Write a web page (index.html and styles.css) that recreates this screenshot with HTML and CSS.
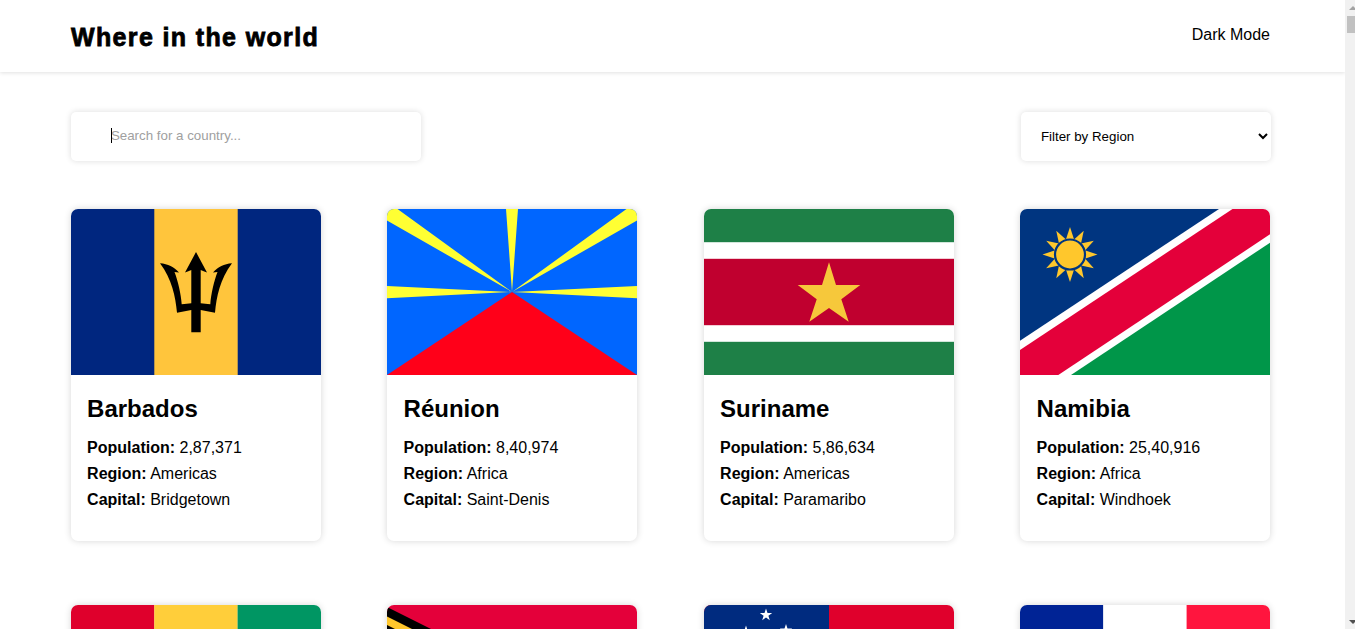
FILE: index.html
```html
<!DOCTYPE html>
<html lang="en">
<head>
<meta charset="utf-8">
<title>Where in the world</title>
<link rel="stylesheet" href="styles.css">
</head>
<body>
<div class="page">
  <header class="topbar">
    <h1 class="brand">Where in the world</h1>
    <button class="mode" type="button">Dark Mode</button>
  </header>
  <main class="content">
    <div class="toolbar">
      <div class="search">
        <input class="search-input" type="text" placeholder="Search for a country...">
      </div>
      <select class="region">
        <option>Filter by Region</option>
        <option>Africa</option>
        <option>Americas</option>
        <option>Asia</option>
        <option>Europe</option>
        <option>Oceania</option>
      </select>
    </div>
    <div class="grid">
      <article class="card">
        <svg class="flag" viewBox="0 0 250 166" preserveAspectRatio="none" aria-label="Flag of Barbados">
          <rect width="250" height="166" fill="#00267f"/>
          <rect x="83.3" width="83.4" height="166" fill="#ffc53c"/>
          <path d="M125 43 L136 63.5 Q132.5 62 129.7 61 L129.7 94.3 Q134 95 139.3 95.3 C140 85 143 72 146.5 63 L142 63.5 C147 58 153 55 161 54.3 C149 70 145.5 88 144 103.7 L129.7 101 L129.7 123.3 L120.3 123.3 L120.3 101 L106 103.7 C104.5 88 101 70 89 54.3 C97 55 103 58 108 63.5 L103.5 63 C107 72 110 85 110.7 95.3 Q116 95 120.3 94.3 L120.3 61 Q117.5 62 114 63.5 Z" fill="#000"/>
        </svg>
        <div class="info">
          <h2 class="name">Barbados</h2>
          <p class="fact"><b>Population:</b> 2,87,371</p>
          <p class="fact"><b>Region:</b> Americas</p>
          <p class="fact"><b>Capital:</b> Bridgetown</p>
        </div>
      </article>
      <article class="card">
        <svg class="flag" viewBox="0 0 250 166" preserveAspectRatio="none" aria-label="Flag of Réunion">
          <rect width="250" height="166" fill="#0066ff"/>
          <path d="M125 83 L0 166 L250 166 Z" fill="#ff0019"/>
          <path d="M125 83 L119 0 L131 0 Z M125 83 L10.5 0 L0 0 L0 11.5 Z M125 83 L239.5 0 L250 0 L250 11.5 Z M125 83 L0 77 L0 89.3 Z M125 83 L250 77 L250 89.3 Z" fill="#ffff33"/>
        </svg>
        <div class="info">
          <h2 class="name">Réunion</h2>
          <p class="fact"><b>Population:</b> 8,40,974</p>
          <p class="fact"><b>Region:</b> Africa</p>
          <p class="fact"><b>Capital:</b> Saint-Denis</p>
        </div>
      </article>
      <article class="card">
        <svg class="flag" viewBox="0 0 250 166" preserveAspectRatio="none" aria-label="Flag of Suriname">
          <rect width="250" height="166" fill="#1e8047"/>
          <rect y="33.2" width="250" height="99.6" fill="#fff"/>
          <rect y="49.8" width="250" height="66.4" fill="#c0002f"/>
          <path d="M125 53.3 L132 76 L156.3 76 L137.3 90.3 L144.7 112.7 L125 99 L105.3 112.7 L112.7 90.3 L93.7 76 L118 76 Z" fill="#f6c83b"/>
        </svg>
        <div class="info">
          <h2 class="name">Suriname</h2>
          <p class="fact"><b>Population:</b> 5,86,634</p>
          <p class="fact"><b>Region:</b> Americas</p>
          <p class="fact"><b>Capital:</b> Paramaribo</p>
        </div>
      </article>
      <article class="card">
        <svg class="flag" viewBox="0 0 250 166" preserveAspectRatio="none" aria-label="Flag of Namibia">
          <rect width="250" height="166" fill="#fff"/>
          <path d="M0 0 L199 0 L0 131.7 Z" fill="#003580"/>
          <path d="M212.5 0 L250 0 L250 25.3 L38.3 166 L0 166 L0 141 Z" fill="#e4003a"/>
          <path d="M250 33.7 L250 166 L51 166 Z" fill="#009649"/>
          <g transform="translate(50 45.5)" fill="#ffc72c">
            <path id="ray" d="M0 -27.5 L4.4 -14 L-4.4 -14 Z"/>
            <use href="#ray" transform="rotate(30)"/>
            <use href="#ray" transform="rotate(60)"/>
            <use href="#ray" transform="rotate(90)"/>
            <use href="#ray" transform="rotate(120)"/>
            <use href="#ray" transform="rotate(150)"/>
            <use href="#ray" transform="rotate(180)"/>
            <use href="#ray" transform="rotate(210)"/>
            <use href="#ray" transform="rotate(240)"/>
            <use href="#ray" transform="rotate(270)"/>
            <use href="#ray" transform="rotate(300)"/>
            <use href="#ray" transform="rotate(330)"/>
            <circle r="15" fill="#ffc72c" stroke="#003580" stroke-width="2.2"/>
          </g>
        </svg>
        <div class="info">
          <h2 class="name">Namibia</h2>
          <p class="fact"><b>Population:</b> 25,40,916</p>
          <p class="fact"><b>Region:</b> Africa</p>
          <p class="fact"><b>Capital:</b> Windhoek</p>
        </div>
      </article>
      <article class="card">
        <svg class="flag" viewBox="0 0 250 166" preserveAspectRatio="none" aria-label="Flag with red, yellow and green stripes">
          <rect width="83.4" height="166" fill="#df002c"/>
          <rect x="83.3" width="83.4" height="166" fill="#ffce3a"/>
          <rect x="166.6" width="83.4" height="166" fill="#009663"/>
        </svg>
      </article>
      <article class="card">
        <svg class="flag" viewBox="0 0 250 166" preserveAspectRatio="none" aria-label="Flag with red field and black and yellow bands">
          <rect width="250" height="83" fill="#e4003a"/>
          <rect y="83" width="250" height="83" fill="#009543"/>
          <path d="M0 2 L162 83 L0 164 Z" fill="#000"/>
          <path d="M0 11.5 L143 83 L0 154.5 Z" fill="#ffc72c"/>
          <path d="M0 20 L126 83 L0 146 Z" fill="#000"/>
        </svg>
      </article>
      <article class="card">
        <svg class="flag" viewBox="0 0 250 166" preserveAspectRatio="none" aria-label="Flag with blue canton and white stars">
          <rect width="250" height="166" fill="#e0002c"/>
          <rect width="125" height="83" fill="#002b7f"/>
          <g fill="#fff">
            <path transform="translate(62 10)" d="M0 -6.5 L1.5 -2 L6.2 -2 L2.4 0.8 L3.8 5.3 L0 2.5 L-3.8 5.3 L-2.4 0.8 L-6.2 -2 L-1.5 -2 Z"/>
            <path transform="translate(42 27)" d="M0 -6.5 L1.5 -2 L6.2 -2 L2.4 0.8 L3.8 5.3 L0 2.5 L-3.8 5.3 L-2.4 0.8 L-6.2 -2 L-1.5 -2 Z"/>
            <path transform="translate(82 25.5)" d="M0 -6.5 L1.5 -2 L6.2 -2 L2.4 0.8 L3.8 5.3 L0 2.5 L-3.8 5.3 L-2.4 0.8 L-6.2 -2 L-1.5 -2 Z"/>
          </g>
        </svg>
      </article>
      <article class="card">
        <svg class="flag" viewBox="0 0 250 166" preserveAspectRatio="none" aria-label="Flag with blue, white and red stripes">
          <rect width="83.4" height="166" fill="#002395"/>
          <rect x="83.3" width="83.4" height="166" fill="#fff"/>
          <rect x="166.6" width="83.4" height="166" fill="#ff153e"/>
        </svg>
      </article>
    </div>
  </main>
</div>
<div class="scrollbar" aria-hidden="true">
  <span class="arrow-up"></span>
  <span class="thumb"></span>
  <span class="spacer"></span>
  <span class="arrow-down"></span>
</div>
</body>
</html>
```

FILE: styles.css
```css
* {
  box-sizing: border-box;
}

html,
body {
  height: 100%;
}

body {
  margin: 0;
  display: flex;
  overflow: hidden;
  background: #fff;
  color: #000;
  font-family: "Liberation Sans", Arial, sans-serif;
  font-size: 16px;
}

.page {
  flex: 1;
  min-width: 0;
  height: 100%;
  overflow: hidden;
}

.topbar {
  height: 72px;
  padding: 0 75px 0 71px;
  display: flex;
  align-items: center;
  justify-content: space-between;
  background: #fff;
  box-shadow: 0 1px 4px rgba(0, 0, 0, 0.12);
}

.brand {
  margin: 2px 0 0;
  font-size: 25px;
  font-weight: 700;
  letter-spacing: 1.36px;
  -webkit-text-stroke: 0.8px #000;
  line-height: 28px;
}

.mode {
  padding: 0;
  margin-bottom: 2px;
  border: 0;
  background: none;
  color: #000;
  font: 16px/20px "Liberation Sans", Arial, sans-serif;
}

.content {
  padding: 40px 0 0 70.9px;
}

.toolbar {
  width: 1200px;
  display: flex;
  justify-content: space-between;
}

.search {
  position: relative;
  width: 350px;
  height: 49px;
  border-radius: 5px;
  background: #fff;
  box-shadow: 0 0 6px rgba(0, 0, 0, 0.14);
}

.search::before {
  content: "";
  position: absolute;
  left: 40px;
  top: 16px;
  width: 1px;
  height: 15px;
  background: #000;
}

.search-input {
  display: block;
  width: 100%;
  height: 47px;
  padding: 0 10px 0 40px;
  border: 0;
  outline: 0;
  background: transparent;
  font: 13.33px "Liberation Sans", Arial, sans-serif;
}

.search-input::placeholder {
  color: #a0a0a0;
  opacity: 1;
}

.region {
  width: 250px;
  height: 49px;
  padding: 0 4px 0 16px;
  border: 0;
  border-radius: 5px;
  outline: 0;
  background-color: #fff;
  box-shadow: 0 0 6px rgba(0, 0, 0, 0.14);
  color: #000;
  font: 13.33px "Liberation Sans", Arial, sans-serif;
}

.grid {
  width: 1200px;
  margin-top: 48px;
  display: grid;
  grid-template-columns: repeat(4, 250px);
  column-gap: 66.5px;
  row-gap: 64px;
}

.card {
  height: 332px;
  border-radius: 7px;
  overflow: hidden;
  background: #fff;
  box-shadow: 0 0 7px rgba(0, 0, 0, 0.16);
}

.flag {
  display: block;
  width: 250px;
  height: 166px;
}

.info {
  padding: 20px 16.2px 0;
}

.name {
  margin: 0 0 13px;
  font-size: 24px;
  line-height: 27px;
  font-weight: 700;
}

.fact {
  margin: 0;
  font-size: 16px;
  line-height: 26px;
}

.scrollbar {
  flex: none;
  width: 10px;
  height: 100%;
  display: flex;
  flex-direction: column;
  overflow: hidden;
  background: #f1f1f1;
}

.arrow-up,
.arrow-down {
  flex: none;
  width: 0;
  height: 0;
  margin-left: 4px;
  border-left: 4px solid transparent;
  border-right: 4px solid transparent;
}

.arrow-up {
  margin-top: 6px;
  border-bottom: 4px solid #a3a3a3;
}

.thumb {
  flex: none;
  width: 15px;
  height: 17px;
  margin: 6px 0 0 2px;
  background: #c1c1c1;
}

.spacer {
  flex: 1;
}

.arrow-down {
  margin-bottom: 5px;
  border-top: 4px solid #505050;
}
```
